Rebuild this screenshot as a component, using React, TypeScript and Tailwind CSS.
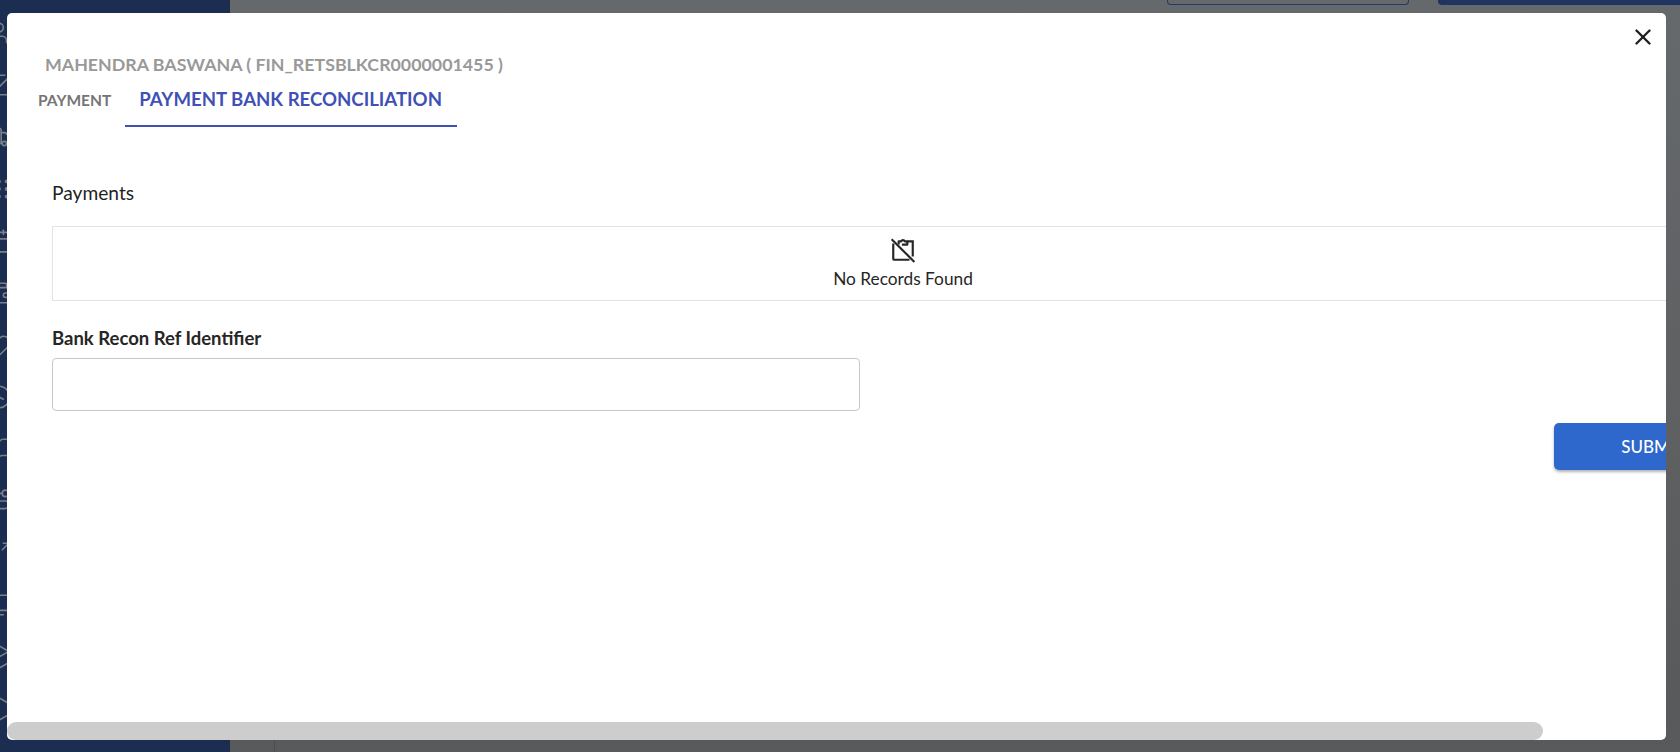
import { useState } from "react";
import {
  User,
  CheckSquare,
  Truck,
  Grip,
  Calendar,
  Wallet,
  Heart,
  Clock,
  BookOpen,
  Route,
  Split,
  Monitor,
  Box,
  Hexagon,
  X,
} from "lucide-react";

const font = "font-['Lato','Open_Sans',sans-serif]";

const sidebarIcons = [User, CheckSquare, Truck, Grip, Calendar, Wallet, Heart, Clock, BookOpen, Route, Split, Monitor, Box, Hexagon];

function NoRecordsIcon() {
  return (
    <svg width="26" height="26" viewBox="0 0 24 24" fill="none" stroke="#262626" strokeWidth="2">
      <path d="M3 6v14a1 1 0 0 0 1 1h14" />
      <path d="M16 4h5v14" />
      <path d="M8 7V4h2.3a1.9 1.9 0 0 1 3.4 0H16v3h-5" strokeLinejoin="round" />
      <path d="M1.5 2l21 21" />
    </svg>
  );
}

export default function App() {
  const [tab, setTab] = useState("recon");

  return (
    <div className={`relative h-[752px] w-[1680px] overflow-hidden bg-gradient-to-b from-[#66696c] to-[#58595a] ${font}`}>
      {/* dimmed page behind the dialog */}
      <div className="flex h-full">
        <aside className="flex h-full w-[230px] flex-col gap-[26px] overflow-hidden bg-[#1b2d51] pt-[20px] text-[#7a808a]">
          {sidebarIcons.map((Icon, i) => (
            <Icon key={i} size={26} strokeWidth={1.5} className="-ml-[14px] shrink-0" />
          ))}
        </aside>
        <div className="h-[12px] w-[45px] self-end border-r border-[#4d4d4d]" />
        <div className="flex flex-1 justify-end">
          <div className="mr-[29px] h-[5px] w-[242px] rounded-b border border-t-0 border-[#1f3a6e]" />
          <div className="h-[5px] w-[242px] rounded-bl bg-[#1f3460]" />
        </div>
      </div>

      {/* dialog */}
      <div className="absolute left-[7px] top-[13px] flex h-[727px] w-[1659px] flex-col overflow-hidden rounded-[5px] bg-white">
        <button className="absolute right-[10px] top-[11px] z-10 text-[#1f1f1f]" aria-label="Close">
          <X size={26} strokeWidth={2.2} />
        </button>
        <div className="min-h-0 flex-1 overflow-hidden">
          <div className="w-[1720px]">
            <h2 className="ml-[38px] mt-[39px] text-[17.8px] font-bold leading-6 text-[#999999]">
              MAHENDRA BASWANA ( FIN_RETSBLKCR0000001455 )
            </h2>
            <div className="ml-[15px] mt-[4px] flex h-[47px] items-start">
              <button
                onClick={() => setTab("payment")}
                className="h-[47px] pb-[5px] pl-[16px] pr-[14px] text-[15.5px] font-bold text-[#757575]"
              >
                PAYMENT
              </button>
              <button
                onClick={() => setTab("recon")}
                className={`h-[47px] border-b-2 pb-[5px] pl-[14px] pr-[15px] text-[18.6px] font-bold text-[#3f51b5] ${
                  tab === "recon" ? "border-[#3f51b5]" : "border-transparent"
                }`}
              >
                PAYMENT BANK RECONCILIATION
              </button>
            </div>
            <div className="ml-[45px] mr-[10px]">
              <p className="mt-[54px] text-[19.2px] leading-6 text-[#1f1f1f]">Payments</p>
              <div className="mt-[21px] flex h-[75px] w-[1702px] flex-col items-center border border-[#e3e3e3] pt-[10px]">
                <NoRecordsIcon />
                <span className="mt-[4px] text-[17.3px] leading-6 text-[#262626]">No Records Found</span>
              </div>
              <label className="mt-[25px] block text-[18.5px] font-bold leading-6 text-[#262626]">
                Bank Recon Ref Identifier
              </label>
              <input className="mt-[8px] block h-[53px] w-[808px] rounded border-[1.5px] border-[#c8c8c8] bg-white" />
              <div className="ml-[1502px] mt-[12px]">
                <button className="h-[47px] w-[198px] rounded-[5px] bg-[#2f68cc] text-[17px] font-medium text-white shadow-[0_2px_3px_rgba(0,0,0,0.3)]">
                  SUBMIT
                </button>
              </div>
            </div>
          </div>
        </div>
        <div className="h-[18px] shrink-0">
          <div className="h-full w-[1536px] rounded-full bg-[#cdcdcd]" />
        </div>
      </div>
    </div>
  );
}
